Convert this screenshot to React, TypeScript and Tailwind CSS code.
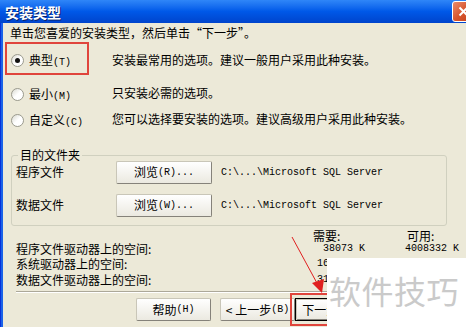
const cjk = "font-['Noto_Sans_CJK_SC','Noto_Sans',sans-serif]";
const mono = "font-['Liberation_Mono','Noto_Sans_CJK_SC',monospace]";

function Radio({ checked }: { checked?: boolean }) {
    return (
        <span className="flex h-[13px] w-[13px] shrink-0 items-center justify-center rounded-full border border-[#9a9a8e] bg-gradient-to-br from-[#d9d8cf] via-white to-white">
            {checked && <span className="h-[5px] w-[5px] rounded-full bg-[#111]" />}
        </span>
    );
}

function XpButton({ children, width, isDefault }: { children: React.ReactNode; width: string; isDefault?: boolean }) {
    return (
        <div className={`${width} h-[23px] shrink-0 ${isDefault ? "border border-black" : ""}`}>
            <div className="flex h-full w-full items-center justify-center rounded-[2px] border border-[#c9c6b8] border-r-[#85827a] border-b-[#85827a] bg-gradient-to-b from-white to-[#ebe9e0] text-[12px]">
                {children}
            </div>
        </div>
    );
}

function TitleBar() {
    return (
        <div className="flex h-[23px] items-center justify-between overflow-hidden bg-gradient-to-b from-[#2f86f8] via-[#0058e8] to-[#0044cc]">
            <span className={`${cjk} pl-[5px] text-[14px] font-bold leading-none text-white [text-shadow:1px_1px_0_#0a246a]`}>
                安装类型
            </span>
            <div className="mr-[-8px] flex h-[21px] w-[22px] items-center justify-center rounded-[3px] border border-white bg-gradient-to-br from-[#e88a6a] via-[#d8562e] to-[#c43e17]">
                <svg width="11" height="11" viewBox="0 0 11 11">
                    <path d="M1.5 1.5 L9.5 9.5 M9.5 1.5 L1.5 9.5" stroke="white" strokeWidth="2" />
                </svg>
            </div>
        </div>
    );
}

export default function App() {
    return (
        <div className={`${cjk} relative h-[327px] w-[466px] overflow-hidden bg-[#ECE9D8] text-[12px] text-black`}>
            <TitleBar />

            <div className="flex h-[304px]">
                {/* window frame */}
                <div className="w-[3px] shrink-0 border-l border-[#0831d9] bg-[#1a62e8]" />

                <div className="flex flex-1 flex-col">
                    <div className="flex h-[19px] items-center pl-[7px]">单击您喜爱的安装类型，然后单击“下一步”。</div>

                    {/* setup type options */}
                    <div className="flex h-[33px] items-center">
                        <div className="w-[109px] shrink-0">
                            <div className="ml-[2px] flex h-[33px] w-[84px] items-center gap-[5px] border-2 border-[#e0453c] pl-[4px] pt-[4px]">
                                <Radio checked />
                                <span>典型<span className={`${mono} text-[10px]`}>(T)</span></span>
                            </div>
                        </div>
                        <span className="pt-[2px]">安装最常用的选项。建议一般用户采用此种安装。</span>
                    </div>

                    <div className="mt-[5px] flex h-[26px] items-center">
                        <div className="flex w-[109px] shrink-0 items-center gap-[5px] pl-[8px] pt-[2px]">
                            <Radio />
                            <span>最小<span className={`${mono} text-[10px]`}>(M)</span></span>
                        </div>
                        <span>只安装必需的选项。</span>
                    </div>

                    <div className="flex h-[26px] items-center">
                        <div className="flex w-[109px] shrink-0 items-center gap-[5px] pl-[8px] pt-[2px]">
                            <Radio />
                            <span>自定义<span className={`${mono} text-[10px]`}>(C)</span></span>
                        </div>
                        <span>您可以选择要安装的选项。建议高级用户采用此种安装。</span>
                    </div>

                    {/* destination folder */}
                    <fieldset className="ml-[8px] mt-[17px] w-[436px] rounded-[3px] border border-[#d0d0bf] pb-[9px]">
                        <legend className="ml-[6px] px-[2px] leading-[12px]">目的文件夹</legend>
                        <div className="flex h-[22px] items-center">
                            <span className="w-[104px] shrink-0 pl-[4px]">程序文件</span>
                            <XpButton width="w-[96px]">
                                浏览<span className={`${mono} text-[10px]`}>(R)...</span>
                            </XpButton>
                            <span className={`${mono} ml-[9px] text-[10px]`}>C:\...\Microsoft SQL Server</span>
                        </div>
                        <div className="mt-[11px] flex h-[22px] items-center">
                            <span className="w-[104px] shrink-0 pl-[4px]">数据文件</span>
                            <XpButton width="w-[96px]">
                                浏览<span className={`${mono} text-[10px]`}>(W)...</span>
                            </XpButton>
                            <span className={`${mono} ml-[9px] text-[10px]`}>C:\...\Microsoft SQL Server</span>
                        </div>
                    </fieldset>

                    {/* disk space */}
                    <div className="mt-[4px] flex h-[12px] items-center leading-none">
                        <span className="w-[310px] shrink-0" />
                        <span className="w-[94px] shrink-0">需要:</span>
                        <span>可用:</span>
                    </div>
                    {[
                        ["程序文件驱动器上的空间:", "38073 K", "4008332 K", "h-[14px]"],
                        ["系统驱动器上的空间:", "164864 K", "4008332 K", "h-[16px]"],
                        ["数据文件驱动器上的空间:", "312456 K", "4008332 K", "h-[16px]"],
                    ].map(([label, need, free, h]) => (
                        <div key={label} className={`flex ${h} items-center leading-none`}>
                            <span className="w-[314px] shrink-0 pl-[13px]">{label}</span>
                            <span className={`${mono} w-[48px] shrink-0 text-right text-[10px]`}>{need}</span>
                            <span className={`${mono} ml-[40px] text-[10px]`}>{free}</span>
                        </div>
                    ))}

                    <div className="ml-[13px] mt-[3px] h-[2px] border-t border-b border-t-[#aca899] border-b-white" />

                    <div className="mt-[5px] flex">
                        <div className="ml-[133px]">
                            <XpButton width="w-[75px]">
                                帮助<span className={`${mono} text-[10px]`}>(H)</span>
                            </XpButton>
                        </div>
                        <div className="ml-[9px]">
                            <XpButton width="w-[75px]">
                                &lt; 上一步<span className={`${mono} text-[10px]`}>(B)</span>
                            </XpButton>
                        </div>
                        <XpButton width="w-[75px]" isDefault>
                            下一步<span className={`${mono} text-[10px]`}>(N)</span> &gt;
                        </XpButton>
                    </div>
                </div>
            </div>

            {/* screenshot annotations */}
            <div className="absolute left-[290px] top-[293px] h-[33px] w-[60px] border-2 border-[#e0453c]" />
            <svg className="absolute left-0 top-0" width="466" height="327">
                <line x1="292" y1="237" x2="318" y2="285" stroke="#e02020" strokeWidth="1" />
                <polygon points="322,293 312,283 324,279" fill="#e02020" />
            </svg>
            <div className="absolute bottom-0 left-[327px] right-0 top-[258px] flex items-center bg-white pb-[6px] pl-[2px]">
                <span className="text-[32px] leading-none tracking-[0.5px] text-[#cacaca]">软件技巧</span>
            </div>
        </div>
    );
}
